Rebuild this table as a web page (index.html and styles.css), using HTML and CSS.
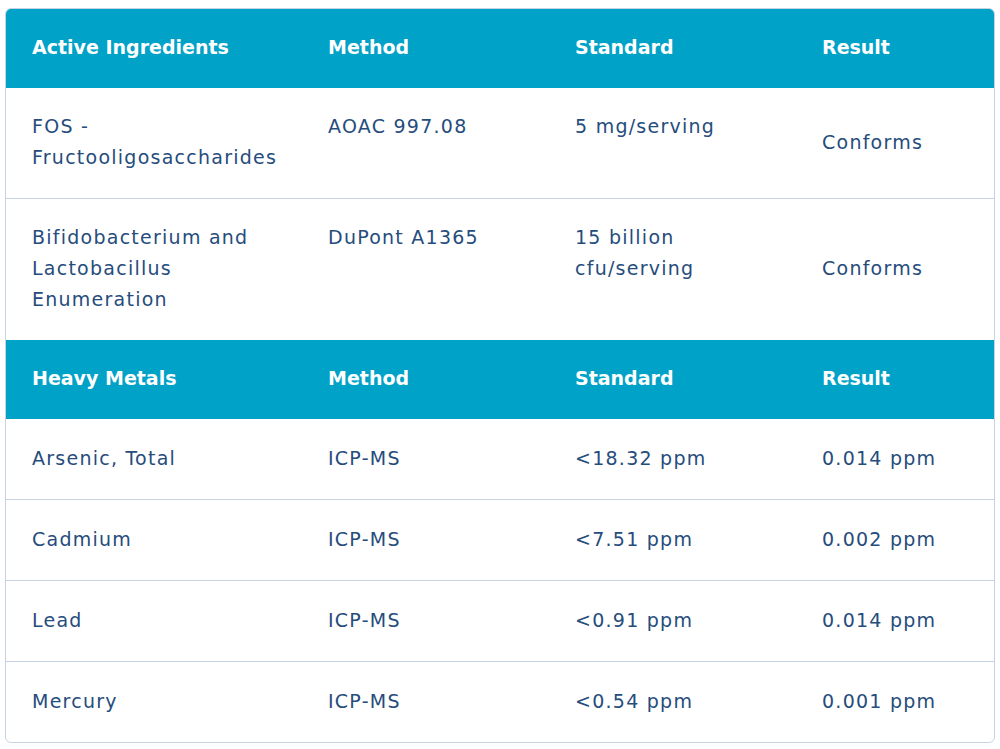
FILE: index.html
```html
<!DOCTYPE html>
<html>
<head>
<meta charset="utf-8">
<link rel="stylesheet" href="styles.css">
</head>
<body>
<div class="wrap">
<table class="tbl">
  <colgroup>
    <col class="c1"><col class="c2"><col class="c3"><col class="c4">
  </colgroup>
  <tr class="head first">
    <th>Active Ingredients</th><th>Method</th><th>Standard</th><th>Result</th>
  </tr>
  <tr class="r2">
    <td>FOS -<br>Fructooligosaccharides</td><td>AOAC 997.08</td><td>5 mg/serving</td><td class="res">Conforms</td>
  </tr>
  <tr class="r3">
    <td>Bifidobacterium and<br>Lactobacillus<br>Enumeration</td><td>DuPont A1365</td><td>15 billion<br>cfu/serving</td><td class="res">Conforms</td>
  </tr>
  <tr class="head">
    <th>Heavy Metals</th><th>Method</th><th>Standard</th><th>Result</th>
  </tr>
  <tr class="r1">
    <td>Arsenic, Total</td><td>ICP-MS</td><td>&lt;18.32 ppm</td><td class="res">0.014 ppm</td>
  </tr>
  <tr class="r1">
    <td>Cadmium</td><td>ICP-MS</td><td>&lt;7.51 ppm</td><td class="res">0.002 ppm</td>
  </tr>
  <tr class="r1">
    <td>Lead</td><td>ICP-MS</td><td>&lt;0.91 ppm</td><td class="res">0.014 ppm</td>
  </tr>
  <tr class="r1 last">
    <td>Mercury</td><td>ICP-MS</td><td>&lt;0.54 ppm</td><td class="res">0.001 ppm</td>
  </tr>
</table>
</div>
</body>
</html>
```
FILE: styles.css
```css
html, body {
  margin: 0;
  padding: 0;
  background: #ffffff;
}
.wrap {
  padding: 8px 5px 0 5px;
}
.tbl {
  width: 990px;
  border-collapse: separate;
  border-spacing: 0;
  border: 1px solid #c6d3e4;
  border-radius: 6px;
  overflow: hidden;
  table-layout: fixed;
  font-family: "DejaVu Sans", sans-serif;
  font-size: 19px;
  line-height: 31px;
  color: #264c7c;
}
.c1 { width: 296px; }
.c2 { width: 247px; }
.c3 { width: 247px; }
.c4 { width: 198px; }
.tbl th {
  background: #00a2c7;
  color: #ffffff;
  font-weight: 600;
  text-align: left;
  height: 77px;
  padding: 0 0 2px 26px;
  vertical-align: middle;
}
.tbl td {
  text-align: left;
  vertical-align: top;
  padding: 23px 0 25px 26px;
  border-top: 1px solid #c6d3e4;
  letter-spacing: 1.25px;
}
.tbl .head + tr td { border-top: none; }
.tbl td.res { vertical-align: middle; }
.tbl .r1 td { padding-top: 24px; padding-bottom: 25px; }
```
